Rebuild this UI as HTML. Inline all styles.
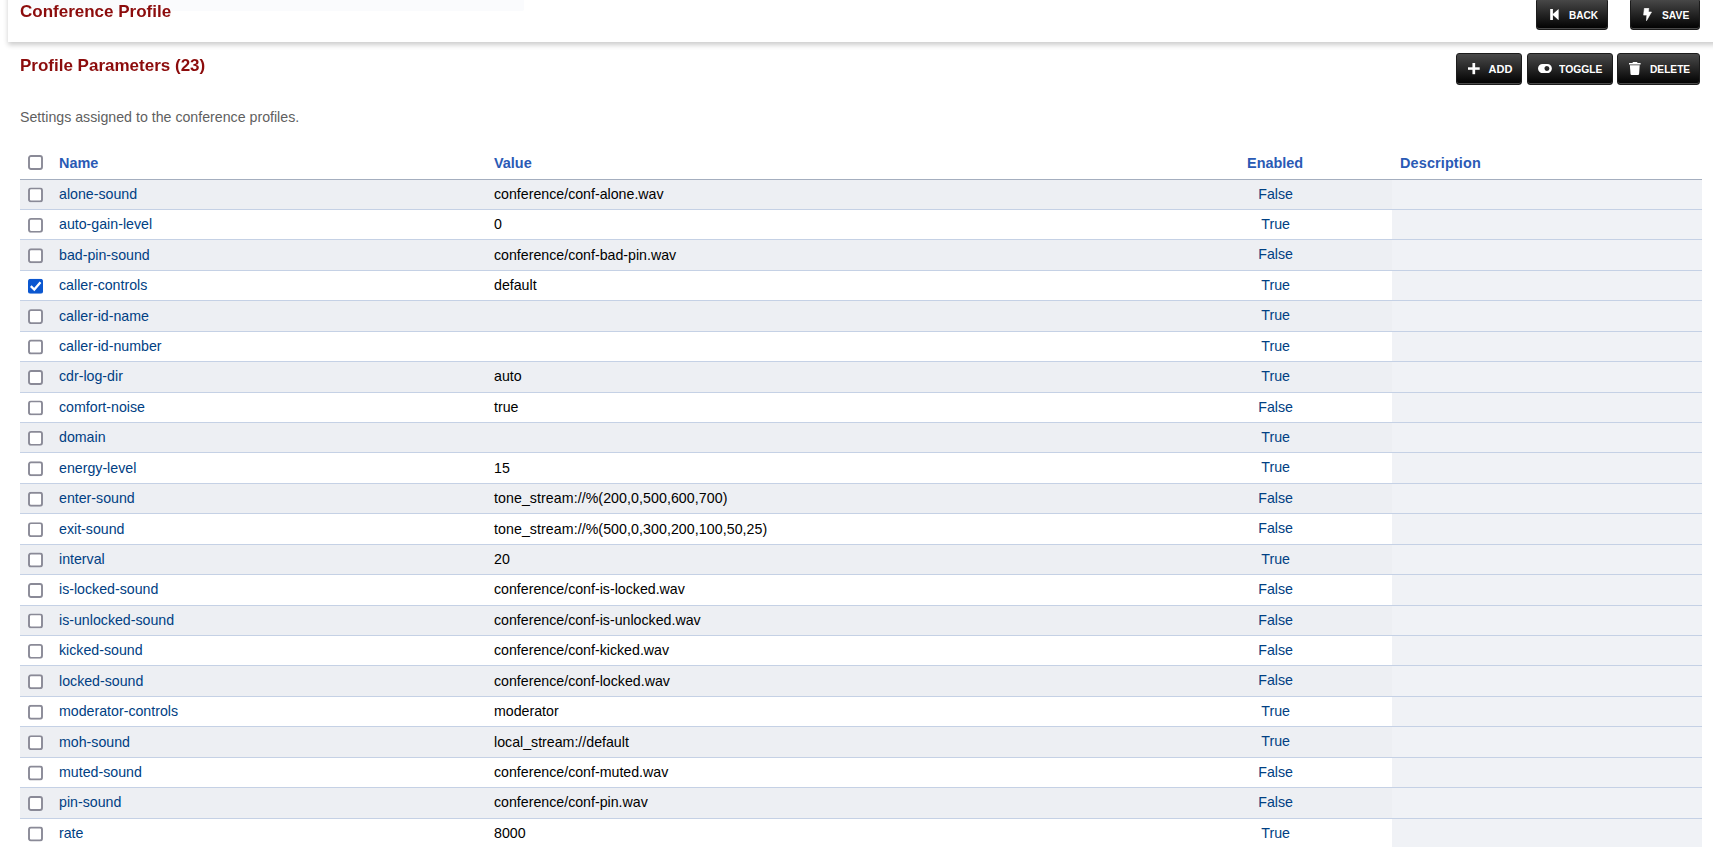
<!DOCTYPE html>
<html><head><meta charset="utf-8"><title>Conference Profile</title>
<style>
html,body{margin:0;padding:0;background:#fff;overflow:hidden;}
body{width:1713px;height:847px;position:relative;font-family:"Liberation Sans",sans-serif;}
.faint{position:absolute;left:20px;top:0;width:503.5px;height:10.5px;background:#fafbfd;border-bottom-right-radius:2px;z-index:6;}
.bar{position:absolute;left:8px;top:-10px;width:1760px;height:52px;background:#fff;box-shadow:0 3px 5px 0 rgba(0,0,0,0.2);z-index:5;}
.title{position:absolute;left:20px;top:2px;font-size:17px;font-weight:bold;color:#8c0c0c;line-height:20px;z-index:7;white-space:nowrap;will-change:transform;}
.btn{position:absolute;box-sizing:border-box;border:1px solid #1c1c1c;border-radius:3px;
 background:linear-gradient(to bottom,#4a4a4a 0%,#000 100%);box-shadow:inset 0 -1px 0 #4a4a4a;
 color:#fff;font-weight:bold;font-size:11px;z-index:8;}
.btn .lbl{position:absolute;white-space:nowrap;line-height:11px;transform-origin:0 0;}
.btn svg{position:absolute;}
.h2{position:absolute;left:20px;top:56px;font-size:17px;font-weight:bold;color:#8c0c0c;line-height:20px;white-space:nowrap;will-change:transform;}
.sub{position:absolute;left:20px;top:109px;font-size:14.2px;color:#5f5f5f;line-height:16px;white-space:nowrap;}
.th{position:absolute;top:155px;font-size:14.45px;font-weight:bold;color:#2a5ab5;line-height:16px;white-space:nowrap;}
.hb{position:absolute;left:20px;top:179px;width:1682px;height:1px;background:#a4aebf;}
.row{position:absolute;left:20px;width:1682px;box-sizing:content-box;border-bottom:1px solid #c5d1e5;background:#fff;}
.row.dark{background:#edeff3;}
.desc{position:absolute;left:1372px;top:0;right:0;bottom:0;background:#f0f2f6;}
.cbw{position:absolute;left:8px;top:7.4px;width:15px;height:15px;}
.cb{display:block;}
.nm,.val,.en{position:absolute;top:6px;font-size:14.2px;line-height:16px;white-space:nowrap;}
.nm{left:39px;color:#004083;}
.val{left:474px;color:#000;}
.en{left:1215.6px;width:80px;text-align:center;color:#004083;}
</style></head><body>
<div class="faint"></div>
<div class="bar"></div>
<div class="title">Conference Profile</div>

<div class="btn" style="left:1536px;top:-2px;width:72px;height:32px;">
 <svg style="left:12.6px;top:9.8px" width="9" height="11.2" viewBox="0 0 9 11.2"><rect x="0.2" y="0" width="2.7" height="11.2" fill="#fff"/><path d="M8.6 0 V11.2 L2.3 5.6 Z" fill="#fff"/></svg>
 <span class="lbl" style="left:32.2px;top:11.3px;transform:scaleX(0.915)">BACK</span></div>
<div class="btn" style="left:1630px;top:-2px;width:70px;height:32px;">
 <svg style="left:12px;top:9px" width="10" height="14" viewBox="0 0 10 14"><path d="M1.4 0.3 H5.8 L5.4 4.0 H8.5 L3.5 12.7 L3.8 7.1 H0.6 Z" fill="#fff" stroke="#fff" stroke-width="0.6" stroke-linejoin="round"/></svg>
 <span class="lbl" style="left:31.4px;top:11.3px;transform:scaleX(0.935)">SAVE</span></div>

<div class="h2">Profile Parameters (23)</div>

<div class="btn" style="left:1456px;top:53px;width:66px;height:32px;">
 <svg style="left:10.8px;top:8.9px" width="12" height="12" viewBox="0 0 12 12"><rect x="4.45" y="0" width="2.7" height="11.2" fill="#fff"/><rect x="0" y="4.3" width="11.7" height="2.5" fill="#fff"/></svg>
 <span class="lbl" style="left:31.5px;top:9.9px;transform:scaleX(1.0)">ADD</span></div>
<div class="btn" style="left:1527px;top:53px;width:86px;height:32px;">
 <svg style="left:9.6px;top:9.9px" width="14" height="9.2" viewBox="0 0 14 9.2"><path d="M4.6 0 H9.3 A4.6 4.6 0 0 1 9.3 9.2 H4.6 A4.6 4.6 0 0 1 4.6 0 Z M8.95 2.1 A2.5 2.5 0 1 0 8.95 7.1 A2.5 2.5 0 1 0 8.95 2.1 Z" fill="#fff" fill-rule="evenodd"/></svg>
 <span class="lbl" style="left:31.2px;top:9.9px;transform:scaleX(0.94)">TOGGLE</span></div>
<div class="btn" style="left:1617px;top:53px;width:83px;height:32px;">
 <svg style="left:11.3px;top:8px" width="12" height="13" viewBox="0 0 12 13"><path d="M4 0 H8 L8.6 1 H11.6 V2.4 H0 V1 H3.4 Z" fill="#fff"/><path d="M0.9 3.3 H10.7 L10.1 12 Q10 13 9 13 H2.6 Q1.6 13 1.5 12 Z" fill="#fff"/></svg>
 <span class="lbl" style="left:31.5px;top:9.9px;transform:scaleX(0.925)">DELETE</span></div>

<div class="sub">Settings assigned to the conference profiles.</div>

<div class="cbw" style="position:absolute;left:28px;top:155px;"><svg class="cb" width="15" height="15" viewBox="0 0 15 15"><rect x="1" y="1" width="13" height="13" rx="2" ry="2" fill="#fff" stroke="#8a8a97" stroke-width="1.9"/></svg></div>
<div class="th" style="left:59px">Name</div>
<div class="th" style="left:494px">Value</div>
<div class="th" style="left:1247px">Enabled</div>
<div class="th" style="left:1400px;letter-spacing:0.13px">Description</div>
<div class="hb"></div>
<div class="row dark" style="top:180px;height:29px"><div class="desc"></div><div class="cbw" style="top:0;transform:translateY(7.40px)"><svg class="cb" width="15" height="15" viewBox="0 0 15 15"><rect x="1" y="1" width="13" height="13" rx="2" ry="2" fill="#fff" stroke="#8a8a97" stroke-width="1.9"/></svg></div><span class="nm" style="top:0;transform:translateY(6.00px)">alone-sound</span><span class="val" style="top:0;transform:translateY(6.00px)">conference/conf-alone.wav</span><span class="en" style="top:0;transform:translateY(6.00px)">False</span></div>
<div class="row" style="top:210px;height:29px"><div class="desc"></div><div class="cbw" style="top:0;transform:translateY(7.83px)"><svg class="cb" width="15" height="15" viewBox="0 0 15 15"><rect x="1" y="1" width="13" height="13" rx="2" ry="2" fill="#fff" stroke="#8a8a97" stroke-width="1.9"/></svg></div><span class="nm" style="top:0;transform:translateY(6.00px)">auto-gain-level</span><span class="val" style="top:0;transform:translateY(6.00px)">0</span><span class="en" style="top:0;transform:translateY(6.00px)">True</span></div>
<div class="row dark" style="top:240px;height:30px"><div class="desc"></div><div class="cbw" style="top:0;transform:translateY(8.26px)"><svg class="cb" width="15" height="15" viewBox="0 0 15 15"><rect x="1" y="1" width="13" height="13" rx="2" ry="2" fill="#fff" stroke="#8a8a97" stroke-width="1.9"/></svg></div><span class="nm" style="top:0;transform:translateY(7.00px)">bad-pin-sound</span><span class="val" style="top:0;transform:translateY(7.00px)">conference/conf-bad-pin.wav</span><span class="en" style="top:0;transform:translateY(6.00px)">False</span></div>
<div class="row" style="top:271px;height:29px"><div class="desc"></div><div class="cbw" style="top:0;transform:translateY(7.69px)"><svg class="cb" width="15" height="15" viewBox="0 0 15 15"><rect x="0" y="0" width="15" height="15" rx="2.5" ry="2.5" fill="#0b57d0"/><path d="M2.8 7.4 L6.3 10.8 L12.5 3.6" fill="none" stroke="#fff" stroke-width="2.3"/></svg></div><span class="nm" style="top:0;transform:translateY(6.00px)">caller-controls</span><span class="val" style="top:0;transform:translateY(6.00px)">default</span><span class="en" style="top:0;transform:translateY(6.00px)">True</span></div>
<div class="row dark" style="top:301px;height:30px"><div class="desc"></div><div class="cbw" style="top:0;transform:translateY(8.12px)"><svg class="cb" width="15" height="15" viewBox="0 0 15 15"><rect x="1" y="1" width="13" height="13" rx="2" ry="2" fill="#fff" stroke="#8a8a97" stroke-width="1.9"/></svg></div><span class="nm" style="top:0;transform:translateY(7.00px)">caller-id-name</span><span class="val" style="top:0;transform:translateY(7.00px)"></span><span class="en" style="top:0;transform:translateY(6.00px)">True</span></div>
<div class="row" style="top:332px;height:29px"><div class="desc"></div><div class="cbw" style="top:0;transform:translateY(7.55px)"><svg class="cb" width="15" height="15" viewBox="0 0 15 15"><rect x="1" y="1" width="13" height="13" rx="2" ry="2" fill="#fff" stroke="#8a8a97" stroke-width="1.9"/></svg></div><span class="nm" style="top:0;transform:translateY(6.00px)">caller-id-number</span><span class="val" style="top:0;transform:translateY(6.00px)"></span><span class="en" style="top:0;transform:translateY(6.00px)">True</span></div>
<div class="row dark" style="top:362px;height:30px"><div class="desc"></div><div class="cbw" style="top:0;transform:translateY(7.98px)"><svg class="cb" width="15" height="15" viewBox="0 0 15 15"><rect x="1" y="1" width="13" height="13" rx="2" ry="2" fill="#fff" stroke="#8a8a97" stroke-width="1.9"/></svg></div><span class="nm" style="top:0;transform:translateY(6.00px)">cdr-log-dir</span><span class="val" style="top:0;transform:translateY(6.00px)">auto</span><span class="en" style="top:0;transform:translateY(6.00px)">True</span></div>
<div class="row" style="top:393px;height:29px"><div class="desc"></div><div class="cbw" style="top:0;transform:translateY(7.41px)"><svg class="cb" width="15" height="15" viewBox="0 0 15 15"><rect x="1" y="1" width="13" height="13" rx="2" ry="2" fill="#fff" stroke="#8a8a97" stroke-width="1.9"/></svg></div><span class="nm" style="top:0;transform:translateY(6.00px)">comfort-noise</span><span class="val" style="top:0;transform:translateY(6.00px)">true</span><span class="en" style="top:0;transform:translateY(6.00px)">False</span></div>
<div class="row dark" style="top:423px;height:29px"><div class="desc"></div><div class="cbw" style="top:0;transform:translateY(7.84px)"><svg class="cb" width="15" height="15" viewBox="0 0 15 15"><rect x="1" y="1" width="13" height="13" rx="2" ry="2" fill="#fff" stroke="#8a8a97" stroke-width="1.9"/></svg></div><span class="nm" style="top:0;transform:translateY(6.00px)">domain</span><span class="val" style="top:0;transform:translateY(6.00px)"></span><span class="en" style="top:0;transform:translateY(6.00px)">True</span></div>
<div class="row" style="top:453px;height:30px"><div class="desc"></div><div class="cbw" style="top:0;transform:translateY(8.27px)"><svg class="cb" width="15" height="15" viewBox="0 0 15 15"><rect x="1" y="1" width="13" height="13" rx="2" ry="2" fill="#fff" stroke="#8a8a97" stroke-width="1.9"/></svg></div><span class="nm" style="top:0;transform:translateY(7.00px)">energy-level</span><span class="val" style="top:0;transform:translateY(7.00px)">15</span><span class="en" style="top:0;transform:translateY(6.00px)">True</span></div>
<div class="row dark" style="top:484px;height:29px"><div class="desc"></div><div class="cbw" style="top:0;transform:translateY(7.70px)"><svg class="cb" width="15" height="15" viewBox="0 0 15 15"><rect x="1" y="1" width="13" height="13" rx="2" ry="2" fill="#fff" stroke="#8a8a97" stroke-width="1.9"/></svg></div><span class="nm" style="top:0;transform:translateY(6.00px)">enter-sound</span><span class="val" style="top:0;transform:translateY(6.00px);letter-spacing:0.07px">tone_stream://%(200,0,500,600,700)</span><span class="en" style="top:0;transform:translateY(6.00px)">False</span></div>
<div class="row" style="top:514px;height:30px"><div class="desc"></div><div class="cbw" style="top:0;transform:translateY(8.13px)"><svg class="cb" width="15" height="15" viewBox="0 0 15 15"><rect x="1" y="1" width="13" height="13" rx="2" ry="2" fill="#fff" stroke="#8a8a97" stroke-width="1.9"/></svg></div><span class="nm" style="top:0;transform:translateY(7.00px)">exit-sound</span><span class="val" style="top:0;transform:translateY(7.00px);letter-spacing:0.07px">tone_stream://%(500,0,300,200,100,50,25)</span><span class="en" style="top:0;transform:translateY(6.00px)">False</span></div>
<div class="row dark" style="top:545px;height:29px"><div class="desc"></div><div class="cbw" style="top:0;transform:translateY(7.56px)"><svg class="cb" width="15" height="15" viewBox="0 0 15 15"><rect x="1" y="1" width="13" height="13" rx="2" ry="2" fill="#fff" stroke="#8a8a97" stroke-width="1.9"/></svg></div><span class="nm" style="top:0;transform:translateY(6.00px)">interval</span><span class="val" style="top:0;transform:translateY(6.00px)">20</span><span class="en" style="top:0;transform:translateY(6.00px)">True</span></div>
<div class="row" style="top:575px;height:30px"><div class="desc"></div><div class="cbw" style="top:0;transform:translateY(7.99px)"><svg class="cb" width="15" height="15" viewBox="0 0 15 15"><rect x="1" y="1" width="13" height="13" rx="2" ry="2" fill="#fff" stroke="#8a8a97" stroke-width="1.9"/></svg></div><span class="nm" style="top:0;transform:translateY(6.00px)">is-locked-sound</span><span class="val" style="top:0;transform:translateY(6.00px)">conference/conf-is-locked.wav</span><span class="en" style="top:0;transform:translateY(6.00px)">False</span></div>
<div class="row dark" style="top:606px;height:29px"><div class="desc"></div><div class="cbw" style="top:0;transform:translateY(7.42px)"><svg class="cb" width="15" height="15" viewBox="0 0 15 15"><rect x="1" y="1" width="13" height="13" rx="2" ry="2" fill="#fff" stroke="#8a8a97" stroke-width="1.9"/></svg></div><span class="nm" style="top:0;transform:translateY(6.00px)">is-unlocked-sound</span><span class="val" style="top:0;transform:translateY(6.00px)">conference/conf-is-unlocked.wav</span><span class="en" style="top:0;transform:translateY(6.00px)">False</span></div>
<div class="row" style="top:636px;height:29px"><div class="desc"></div><div class="cbw" style="top:0;transform:translateY(7.85px)"><svg class="cb" width="15" height="15" viewBox="0 0 15 15"><rect x="1" y="1" width="13" height="13" rx="2" ry="2" fill="#fff" stroke="#8a8a97" stroke-width="1.9"/></svg></div><span class="nm" style="top:0;transform:translateY(6.00px)">kicked-sound</span><span class="val" style="top:0;transform:translateY(6.00px)">conference/conf-kicked.wav</span><span class="en" style="top:0;transform:translateY(6.00px)">False</span></div>
<div class="row dark" style="top:666px;height:30px"><div class="desc"></div><div class="cbw" style="top:0;transform:translateY(8.28px)"><svg class="cb" width="15" height="15" viewBox="0 0 15 15"><rect x="1" y="1" width="13" height="13" rx="2" ry="2" fill="#fff" stroke="#8a8a97" stroke-width="1.9"/></svg></div><span class="nm" style="top:0;transform:translateY(7.00px)">locked-sound</span><span class="val" style="top:0;transform:translateY(7.00px)">conference/conf-locked.wav</span><span class="en" style="top:0;transform:translateY(6.00px)">False</span></div>
<div class="row" style="top:697px;height:29px"><div class="desc"></div><div class="cbw" style="top:0;transform:translateY(7.71px)"><svg class="cb" width="15" height="15" viewBox="0 0 15 15"><rect x="1" y="1" width="13" height="13" rx="2" ry="2" fill="#fff" stroke="#8a8a97" stroke-width="1.9"/></svg></div><span class="nm" style="top:0;transform:translateY(6.00px)">moderator-controls</span><span class="val" style="top:0;transform:translateY(6.00px)">moderator</span><span class="en" style="top:0;transform:translateY(6.00px)">True</span></div>
<div class="row dark" style="top:727px;height:30px"><div class="desc"></div><div class="cbw" style="top:0;transform:translateY(8.14px)"><svg class="cb" width="15" height="15" viewBox="0 0 15 15"><rect x="1" y="1" width="13" height="13" rx="2" ry="2" fill="#fff" stroke="#8a8a97" stroke-width="1.9"/></svg></div><span class="nm" style="top:0;transform:translateY(7.00px)">moh-sound</span><span class="val" style="top:0;transform:translateY(7.00px)">local_stream://default</span><span class="en" style="top:0;transform:translateY(6.00px)">True</span></div>
<div class="row" style="top:758px;height:29px"><div class="desc"></div><div class="cbw" style="top:0;transform:translateY(7.57px)"><svg class="cb" width="15" height="15" viewBox="0 0 15 15"><rect x="1" y="1" width="13" height="13" rx="2" ry="2" fill="#fff" stroke="#8a8a97" stroke-width="1.9"/></svg></div><span class="nm" style="top:0;transform:translateY(6.00px)">muted-sound</span><span class="val" style="top:0;transform:translateY(6.00px)">conference/conf-muted.wav</span><span class="en" style="top:0;transform:translateY(6.00px)">False</span></div>
<div class="row dark" style="top:788px;height:30px"><div class="desc"></div><div class="cbw" style="top:0;transform:translateY(8.00px)"><svg class="cb" width="15" height="15" viewBox="0 0 15 15"><rect x="1" y="1" width="13" height="13" rx="2" ry="2" fill="#fff" stroke="#8a8a97" stroke-width="1.9"/></svg></div><span class="nm" style="top:0;transform:translateY(6.00px)">pin-sound</span><span class="val" style="top:0;transform:translateY(6.00px)">conference/conf-pin.wav</span><span class="en" style="top:0;transform:translateY(6.00px)">False</span></div>
<div class="row" style="top:819px;height:29px"><div class="desc"></div><div class="cbw" style="top:0;transform:translateY(7.43px)"><svg class="cb" width="15" height="15" viewBox="0 0 15 15"><rect x="1" y="1" width="13" height="13" rx="2" ry="2" fill="#fff" stroke="#8a8a97" stroke-width="1.9"/></svg></div><span class="nm" style="top:0;transform:translateY(6.00px)">rate</span><span class="val" style="top:0;transform:translateY(6.00px)">8000</span><span class="en" style="top:0;transform:translateY(6.00px)">True</span></div>
</body></html>
